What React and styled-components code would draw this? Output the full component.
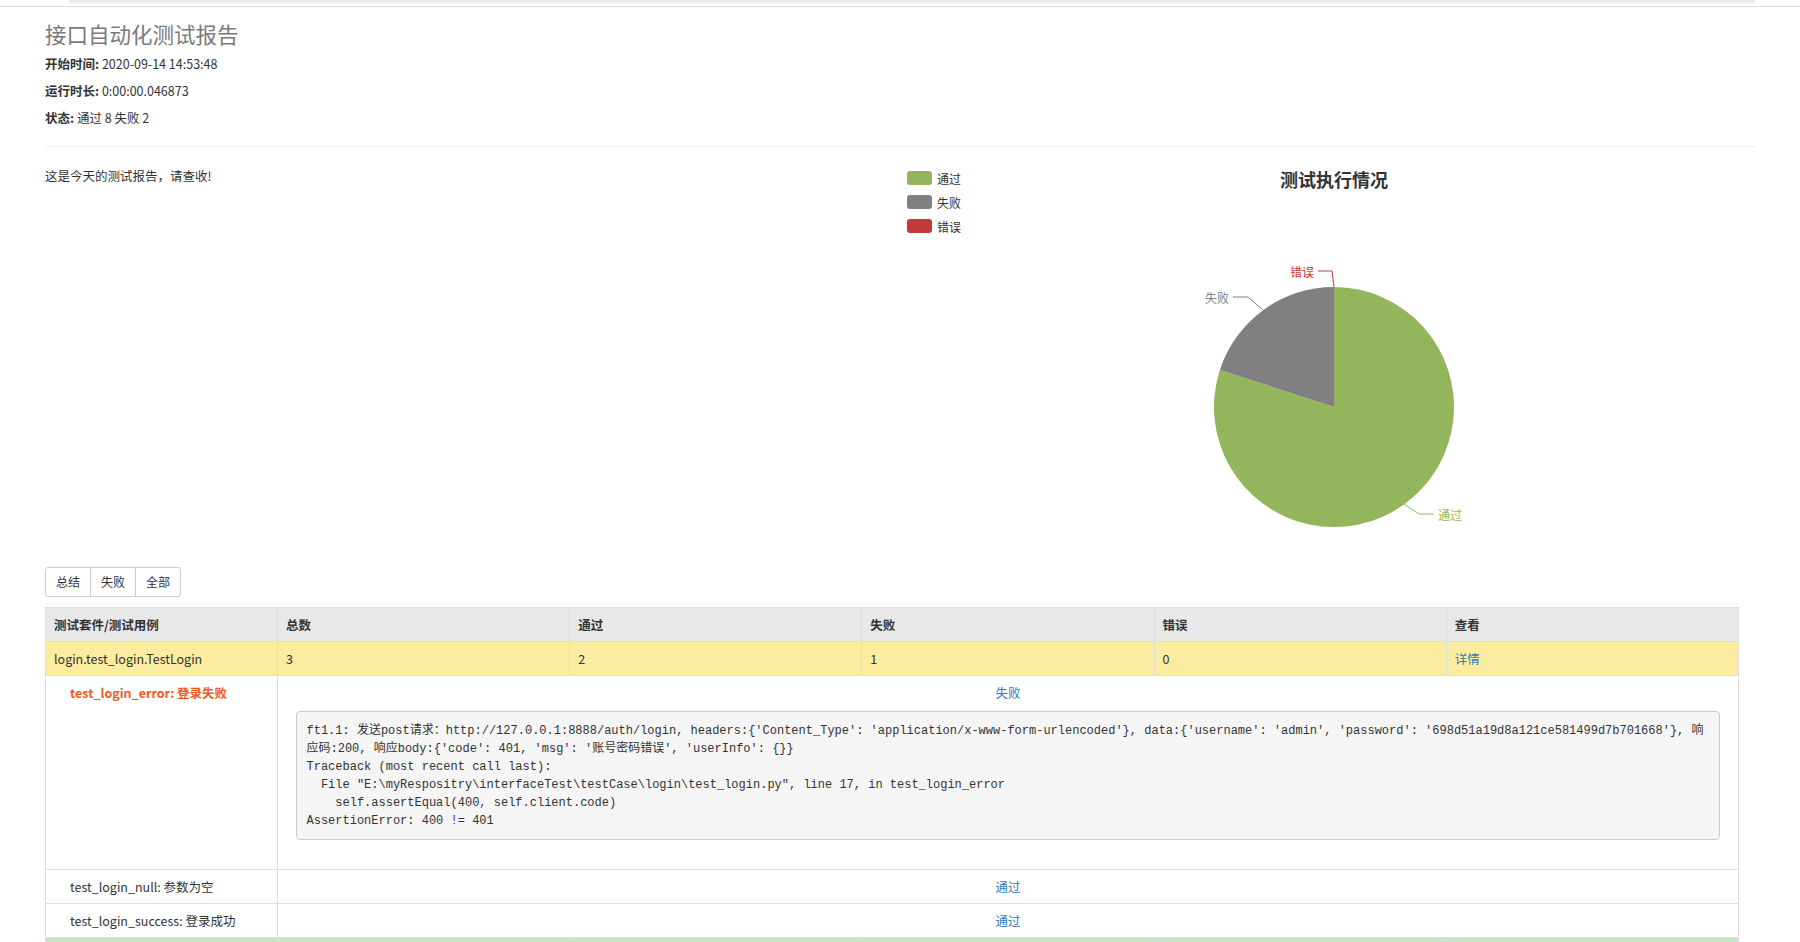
import React from "react";
import styled, { createGlobalStyle } from "styled-components";

const GlobalStyle = createGlobalStyle`
  html, body {
    margin: 0;
    padding: 0;
    background: #fff;
  }
  body {
    font-family: "Microsoft YaHei", "Noto Sans CJK SC", sans-serif;
    font-size: 12.5px;
    color: #333;
  }
`;

const TopBar = styled.div`
  height: 6px;
  border-bottom: 1px solid #dcdcdc;
`;

const TopShade = styled.div`
  height: 4px;
  margin: 0 45px 0 69px;
  background: linear-gradient(#e6e6e6, #f7f7f7);
`;

const Page = styled.div`
  padding: 0 44px 0 45px;
`;

const Title = styled.h1`
  margin: 14px 0 8px;
  font-size: 21.5px;
  line-height: 26px;
  font-weight: normal;
  color: #7a7a7a;
`;

const Attr = styled.p`
  margin: 0 0 10px;
  line-height: 17px;

  strong {
    font-weight: bold;
  }
`;

const Rule = styled.hr`
  margin: 20px 0;
  border: 0;
  border-top: 1px solid #eee;
`;

const Overview = styled.div`
  display: flex;
  height: 400px;
`;

const Description = styled.p`
  flex: 1;
  margin: 0;
  line-height: 18px;
`;

const ChartBox = styled.svg`
  display: block;
  flex: 0 0 856px;
  font-family: "Microsoft YaHei", "Noto Sans CJK SC", sans-serif;
`;

const BtnGroup = styled.div`
  display: inline-flex;
`;

const Btn = styled.button`
  font-family: inherit;
  font-size: 12px;
  line-height: 18px;
  padding: 5px 10px;
  color: #333;
  background: #fff;
  border: 1px solid #ccc;
  margin-left: -1px;
  cursor: pointer;

  &:first-child {
    margin-left: 0;
    border-radius: 3px 0 0 3px;
  }
  &:last-child {
    border-radius: 0 3px 3px 0;
  }
`;

const Table = styled.table`
  width: 99%;
  margin-top: 10px;
  border-collapse: collapse;
  table-layout: fixed;
`;

const Th = styled.th`
  text-align: left;
  font-weight: bold;
  padding: 8px;
  line-height: 17px;
  border: 1px solid #ddd;
  background: #e8e8e8;
`;

const Row = styled.tr`
  background: ${(p) =>
    p.$tone === "suite" ? "#fcec9f" : p.$tone === "total" ? "#c4e8c4" : "#fff"};
`;

const Td = styled.td`
  padding: 8px;
  line-height: 17px;
  height: 17px;
  border: 1px solid #ddd;
  vertical-align: top;
  text-align: ${(p) => (p.$center ? "center" : "left")};
`;

const CaseName = styled.div`
  padding-left: 16px;
  font-weight: ${(p) => (p.$failed ? "bold" : "normal")};
  color: ${(p) => (p.$failed ? "#ee5a1f" : "#333")};
`;

const Link = styled.a`
  color: #337ab7;
  text-decoration: none;
  cursor: pointer;
`;

const Trace = styled.pre`
  margin: 10px 10px 21px;
  padding: 9.5px;
  font-family: "Liberation Mono", "Noto Sans CJK SC", monospace;
  font-size: 12px;
  line-height: 18px;
  color: #333;
  text-align: left;
  background: #f5f5f5;
  border: 1px solid #ccc;
  border-radius: 4px;
  white-space: pre;
  overflow: hidden;
`;

const traceText = [
  "ft1.1: 发送post请求：http://127.0.0.1:8888/auth/login, headers:{'Content_Type': 'application/x-www-form-urlencoded'}, data:{'username': 'admin', 'password': '698d51a19d8a121ce581499d7b701668'}, 响",
  "应码:200, 响应body:{'code': 401, 'msg': '账号密码错误', 'userInfo': {}}",
  "Traceback (most recent call last):",
  '  File "E:\\myRespositry\\interfaceTest\\testCase\\login\\test_login.py", line 17, in test_login_error',
  "    self.assertEqual(400, self.client.code)",
  "AssertionError: 400 != 401",
].join("\n");

const legend = [
  { name: "通过", color: "#93b65d" },
  { name: "失败", color: "#808080" },
  { name: "错误", color: "#c23a3a" },
];

const PieChart = () => (
  <ChartBox width="856" height="400" viewBox="0 0 856 400">
    {legend.map((item, i) => (
      <g key={item.name}>
        <rect x="7" y={4 + i * 24} width="25" height="14" rx="3" fill={item.color} />
        <text x="37" y={11 + i * 24} fontSize="12" fill="#333" dominantBaseline="central">
          {item.name}
        </text>
      </g>
    ))}
    <text x="434" y="12" fontSize="18" fontWeight="bold" fill="#333" textAnchor="middle" dominantBaseline="central">
      测试执行情况
    </text>
    <path d="M434 240 L434 120 A120 120 0 1 1 319.87 202.92 Z" fill="#93b65d" />
    <path d="M434 240 L319.87 202.92 A120 120 0 0 1 434 120 Z" fill="#808080" />

    <polyline points="434,120 432,104 418,104" fill="none" stroke="#c23a3a" strokeWidth="1" />
    <text x="414" y="104" fontSize="12" fill="#c23a3a" textAnchor="end" dominantBaseline="central">
      错误
    </text>

    <polyline points="363,143 348,130 333,130" fill="none" stroke="#808080" strokeWidth="1" />
    <text x="329" y="130" fontSize="12" fill="#808080" textAnchor="end" dominantBaseline="central">
      失败
    </text>

    <polyline points="504,337 519,347 534,347" fill="none" stroke="#93b65d" strokeWidth="1" />
    <text x="538" y="347" fontSize="12" fill="#93b65d" dominantBaseline="central">
      通过
    </text>
  </ChartBox>
);

const App = () => (
  <>
    <GlobalStyle />
    <TopBar>
      <TopShade />
    </TopBar>
    <Page>
      <Title>接口自动化测试报告</Title>
      <Attr>
        <strong>开始时间:</strong> 2020-09-14 14:53:48
      </Attr>
      <Attr>
        <strong>运行时长:</strong> 0:00:00.046873
      </Attr>
      <Attr>
        <strong>状态:</strong> 通过 8 失败 2
      </Attr>
      <Rule />
      <Overview>
        <Description>这是今天的测试报告，请查收!</Description>
        <PieChart />
      </Overview>
      <BtnGroup>
        <Btn>总结</Btn>
        <Btn>失败</Btn>
        <Btn>全部</Btn>
      </BtnGroup>
      <Table>
        <colgroup>
          <col style={{ width: "232px" }} />
          <col />
          <col />
          <col />
          <col />
          <col />
        </colgroup>
        <thead>
          <tr>
            <Th>测试套件/测试用例</Th>
            <Th>总数</Th>
            <Th>通过</Th>
            <Th>失败</Th>
            <Th>错误</Th>
            <Th>查看</Th>
          </tr>
        </thead>
        <tbody>
          <Row $tone="suite">
            <Td>login.test_login.TestLogin</Td>
            <Td>3</Td>
            <Td>2</Td>
            <Td>1</Td>
            <Td>0</Td>
            <Td>
              <Link>详情</Link>
            </Td>
          </Row>
          <Row>
            <Td>
              <CaseName $failed>test_login_error: 登录失败</CaseName>
            </Td>
            <Td colSpan={5} $center>
              <Link>失败</Link>
              <Trace>{traceText}</Trace>
            </Td>
          </Row>
          <Row>
            <Td>
              <CaseName>test_login_null: 参数为空</CaseName>
            </Td>
            <Td colSpan={5} $center>
              <Link>通过</Link>
            </Td>
          </Row>
          <Row>
            <Td>
              <CaseName>test_login_success: 登录成功</CaseName>
            </Td>
            <Td colSpan={5} $center>
              <Link>通过</Link>
            </Td>
          </Row>
          <Row $tone="total">
            <Td />
            <Td />
            <Td />
            <Td />
            <Td />
            <Td />
          </Row>
        </tbody>
      </Table>
    </Page>
  </>
);

export default App;
